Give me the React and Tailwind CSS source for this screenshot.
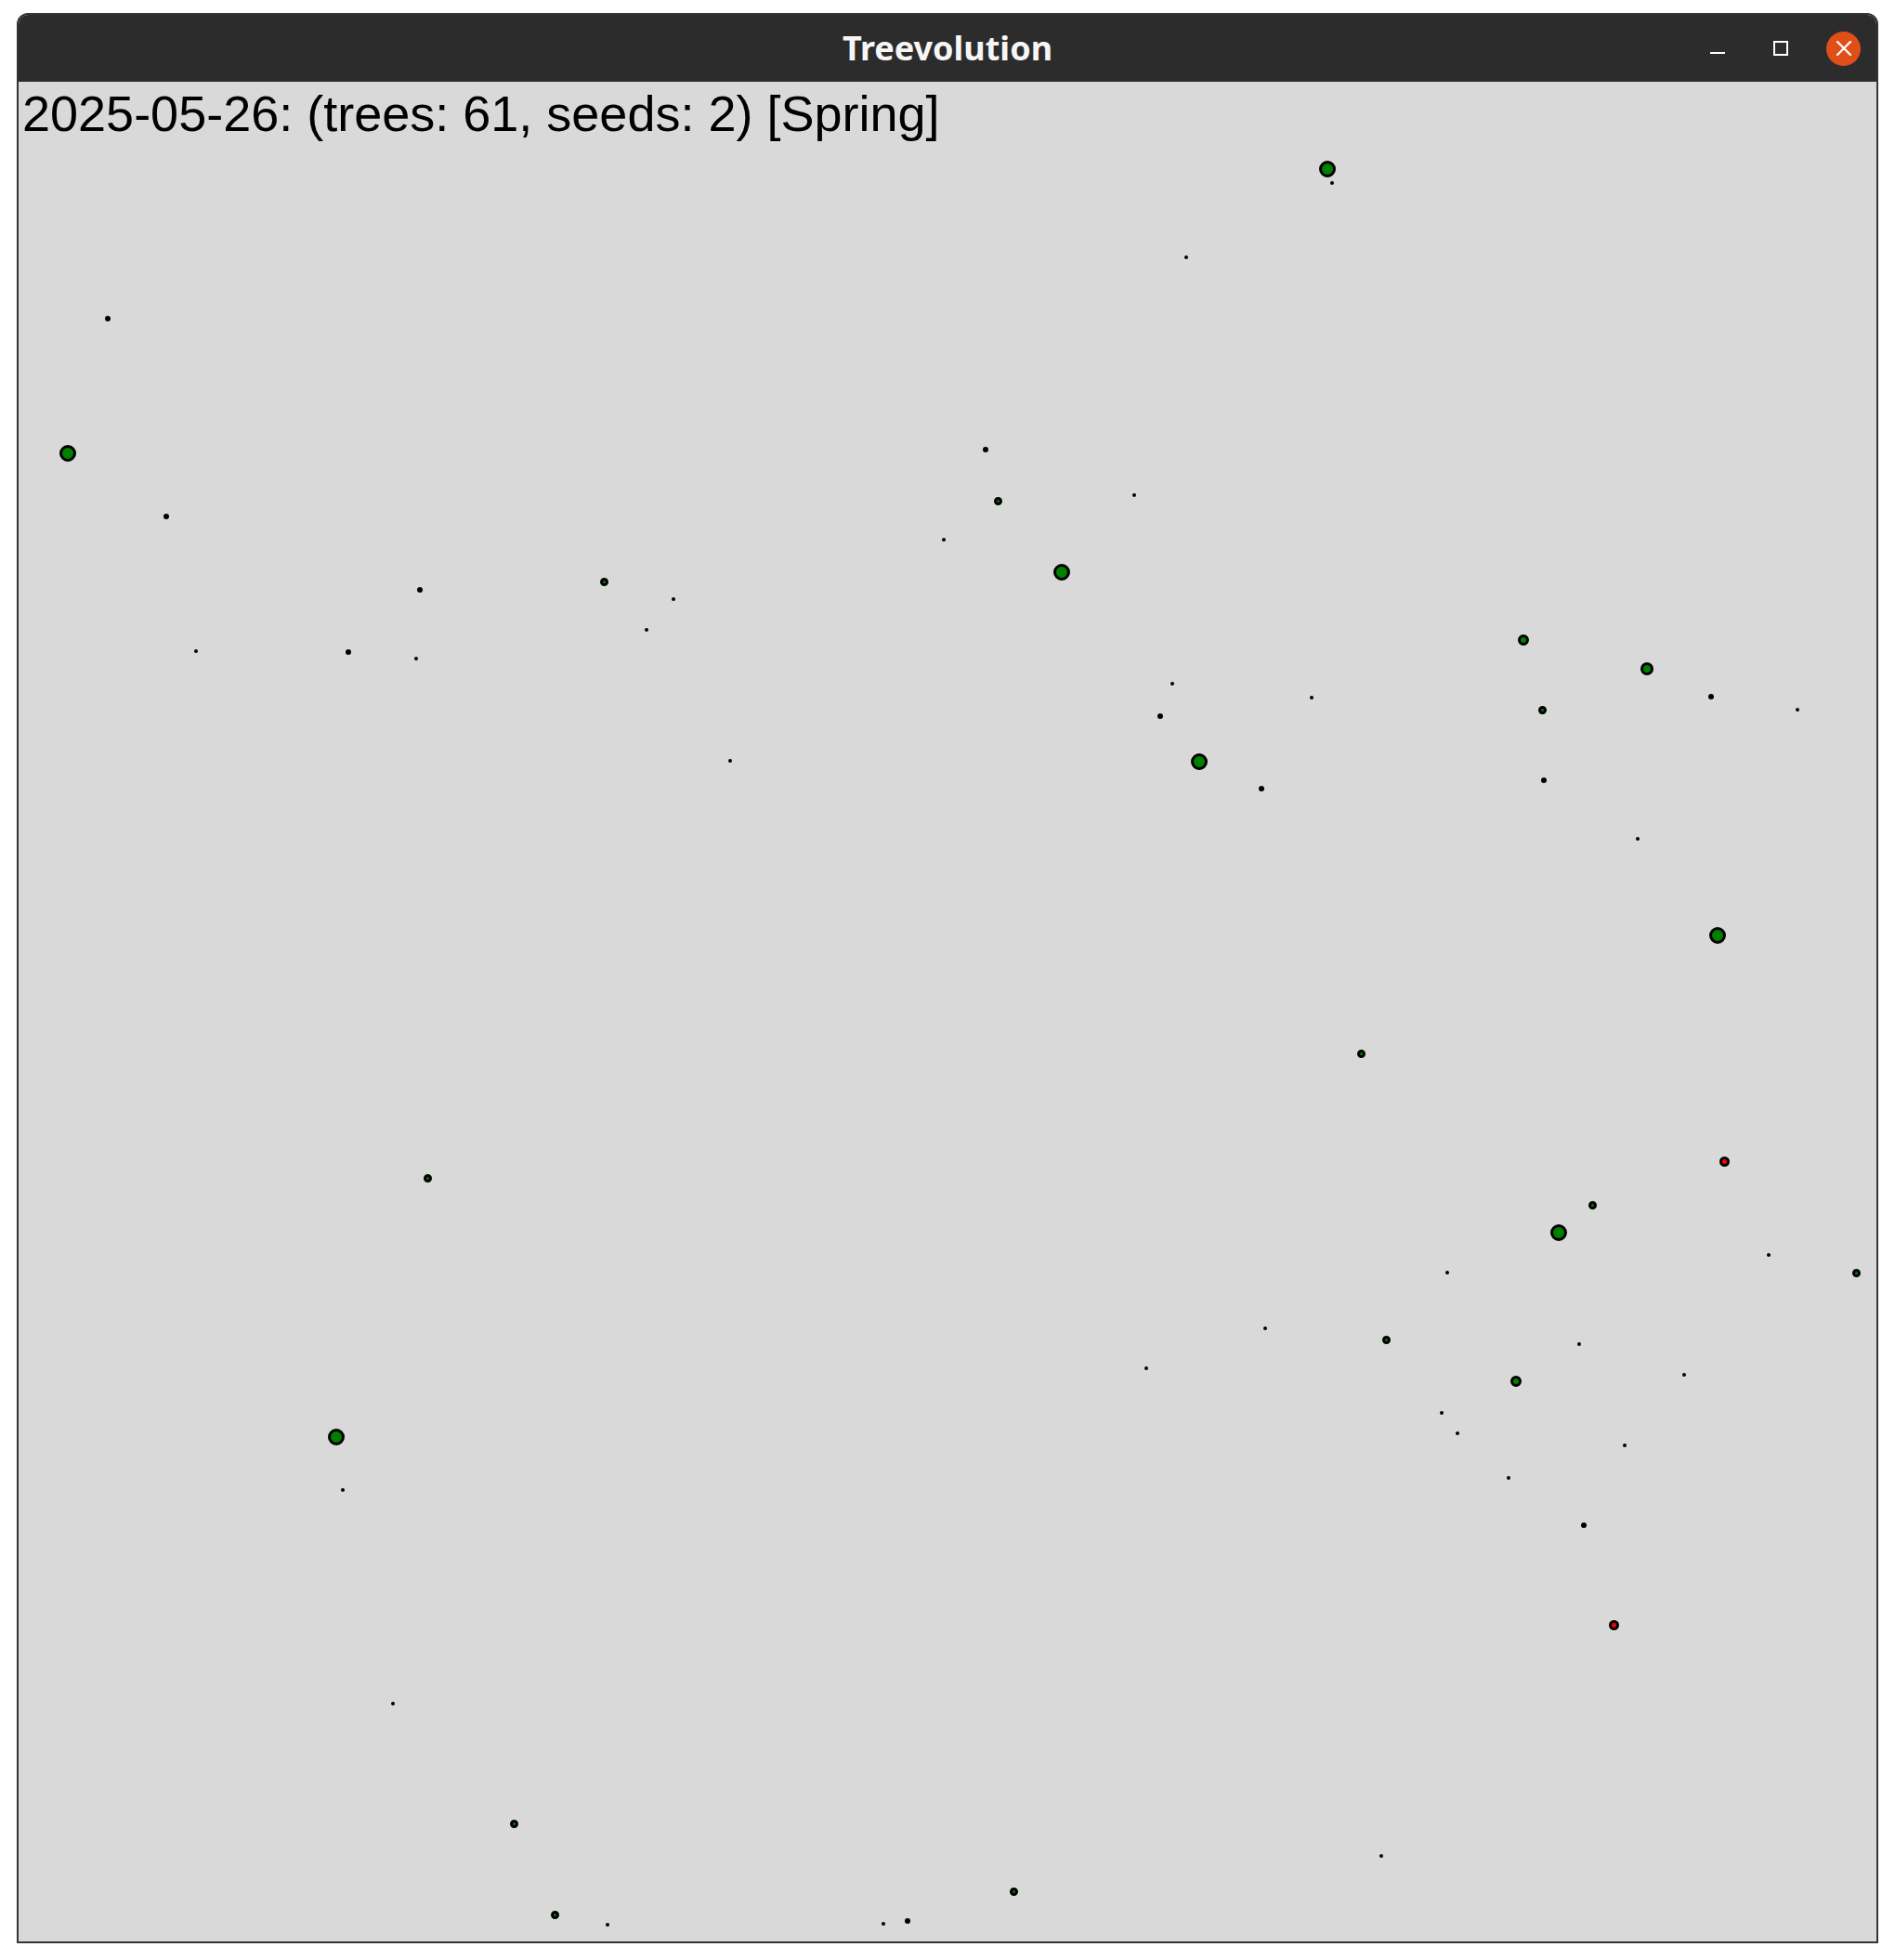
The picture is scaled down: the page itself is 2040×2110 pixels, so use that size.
import React from "react";

const DOTS = [
  [1429, 182, "b"], [1434, 197, "t"], [1277, 277, "t"], [116, 343, "s"],
  [73, 488, "b"], [179, 556, "s"], [1061, 484, "s"], [1074, 539, "g"],
  [1221, 533, "t"], [1016, 581, "t"], [1143, 616, "b"], [650, 626, "g"],
  [452, 635, "s"], [725, 645, "t"], [696, 678, "t"], [211, 701, "t"],
  [375, 702, "s"], [448, 709, "t"], [1640, 689, "m"], [1773, 720, "c"],
  [1842, 750, "s"], [1935, 764, "t"], [1660, 764, "g"], [1262, 736, "t"],
  [1412, 751, "t"], [1249, 771, "s"], [1291, 820, "b"], [1358, 849, "s"],
  [786, 819, "t"], [1662, 840, "s"], [1763, 903, "t"], [1849, 1007, "b"],
  [1465, 1134, "g"], [460, 1268, "g"], [1856, 1250, "r"], [1714, 1297, "g"],
  [1678, 1327, "b"], [1904, 1351, "t"], [1998, 1370, "g"], [1558, 1370, "t"],
  [1362, 1430, "t"], [1492, 1442, "g"], [1700, 1447, "t"], [1234, 1473, "t"],
  [1632, 1487, "m"], [1813, 1480, "t"], [1552, 1521, "t"], [1569, 1543, "t"],
  [1749, 1556, "t"], [1624, 1591, "t"], [362, 1547, "b"], [369, 1604, "t"],
  [1705, 1642, "s"], [1737, 1749, "r"], [423, 1834, "t"], [553, 1963, "g"],
  [1487, 1998, "t"], [1091, 2036, "g"], [597, 2061, "g"], [654, 2072, "t"],
  [951, 2071, "t"], [977, 2068, "s"],
];

const TYPES = {
  t: { d: 4, cls: "w-[4px] h-[4px] bg-black" },
  s: { d: 6, cls: "w-[6px] h-[6px] bg-black" },
  g: { d: 9, cls: "w-[9px] h-[9px] bg-[#008000] border-[3px] border-black" },
  m: { d: 12, cls: "w-[12px] h-[12px] bg-[#008000] border-[3px] border-black" },
  c: { d: 14, cls: "w-[14px] h-[14px] bg-[#008000] border-[3px] border-black" },
  b: { d: 18, cls: "w-[18px] h-[18px] bg-[#008000] border-[3px] border-black" },
  r: { d: 11, cls: "w-[11px] h-[11px] bg-[#ff0000] border-[3px] border-black" },
};

function Dot({ x, y, type }) {
  const t = TYPES[type];
  return (
    <div
      className={"absolute rounded-full box-border " + t.cls}
      style={{ left: x - 20 - t.d / 2, top: y - 88 - t.d / 2 }}
    />
  );
}

export default function App() {
  return (
    <div className="w-[2040px] h-[2110px] bg-white pt-[14px] pl-[18px]">
      <div className="w-[2004px] h-[2078px] border-2 border-[#353535] rounded-t-[12px] overflow-hidden flex flex-col bg-[#d9d9d9]">
        <div className="h-[72px] shrink-0 bg-[#2c2c2c] grid grid-cols-[1fr_auto_1fr] items-center">
          <div />
          <div
            className="text-[36px] font-bold text-[#f6f6f6] leading-none"
            style={{ fontFamily: '"Noto Sans", "DejaVu Sans", sans-serif' }}
          >
            Treevolution
          </div>
          <div className="flex items-center justify-end pr-[17px]">
            <div className="w-[16px] h-[2px] bg-white mt-[10px]" />
            <div className="w-[16px] h-[16px] border-2 border-white ml-[52px]" />
            <div className="w-[37px] h-[37px] rounded-full bg-[#e14f19] ml-[41px] flex items-center justify-center">
              <svg width="16" height="16" viewBox="0 0 16 16">
                <path d="M1 1 L15 15 M15 1 L1 15" stroke="white" strokeWidth="2.2" strokeLinecap="square" />
              </svg>
            </div>
          </div>
        </div>
        <div className="relative flex-1">
          <div
            className="pl-[4px] pt-[7px] text-[54px] leading-none text-black whitespace-nowrap"
            style={{ fontFamily: '"Liberation Sans", Arial, sans-serif' }}
          >
            2025-05-26: (trees: 61, seeds: 2) [Spring]
          </div>
          {DOTS.map(([x, y, type], i) => (
            <Dot key={i} x={x} y={y} type={type} />
          ))}
        </div>
      </div>
    </div>
  );
}
